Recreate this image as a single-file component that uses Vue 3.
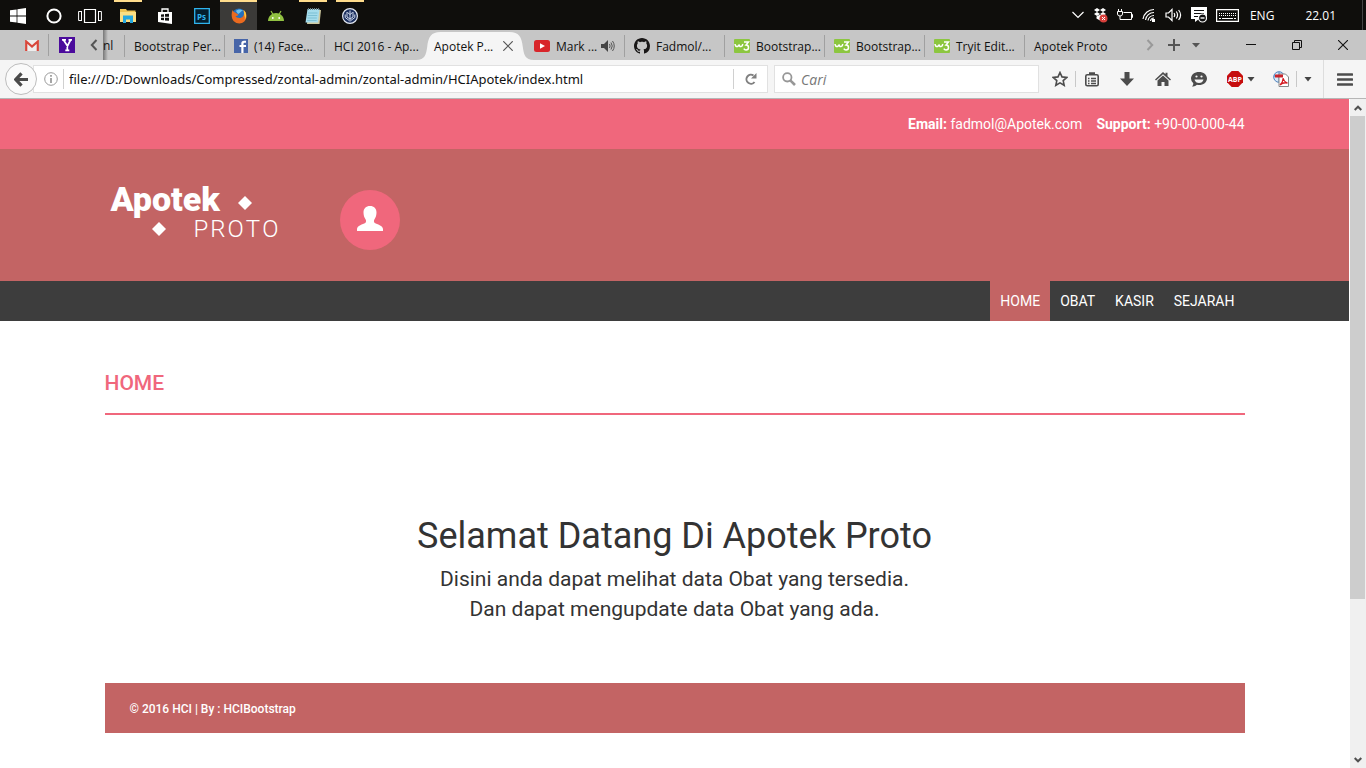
<script setup>
const tabs = [
  { title: 'Bootstrap Per...' },
  { title: '(14) Face...', icon: 'facebook' },
  { title: 'HCI 2016 - Ap...' },
  { title: 'Apotek P...', active: true },
  { title: 'Mark ...', icon: 'youtube', sound: true },
  { title: 'Fadmol/...', icon: 'github' },
  { title: 'Bootstrap...', icon: 'w3' },
  { title: 'Bootstrap...', icon: 'w3' },
  { title: 'Tryit Edit...', icon: 'w3' },
  { title: 'Apotek Proto' },
]
const menu = ['HOME', 'OBAT', 'KASIR', 'SEJARAH']
const address = 'file:///D:/Downloads/Compressed/zontal-admin/zontal-admin/HCIApotek/index.html'
</script>

<template>
  <div class="screen">
    <header class="taskbar">
      <div class="apps">
        <button class="app" aria-label="Start">
          <svg width="16" height="16" viewBox="0 0 16 16" fill="#fff"><path d="M0 2.3 6.6 1.4V7.6H0zM7.4 1.3 16 0V7.6H7.4zM0 8.4H6.6V14.6L0 13.7zM7.4 8.4H16V16L7.4 14.7z" /></svg>
        </button>
        <button class="app" aria-label="Cortana">
          <svg width="16" height="16" viewBox="0 0 16 16"><circle cx="8" cy="8" r="6.6" fill="none" stroke="#fff" stroke-width="2" /></svg>
        </button>
        <button class="app" aria-label="Task view">
          <svg width="24" height="16" viewBox="0 0 24 16" fill="none" stroke="#fff"><path d="M6.5 1.5h11v13h-11z" stroke-width="1.2" /><path d="M4 3.5H.6v9H4M20 3.5h3.4v9H20M3.5 3.5v9M20.5 3.5v9" /></svg>
        </button>
        <button class="app open explorer" aria-label="File Explorer">
          <svg width="16" height="14" viewBox="0 0 16 14"><path d="M0 0h6l1 1.5h8.500V13H0z" fill="#f0c453" /><path d="M0 3h16v10H0z" fill="#fcdf84" /><path d="M3 6.500h10V14h-3v-3.500H6V14H3z" fill="#27a8e0" /></svg>
        </button>
        <button class="app" aria-label="Store">
          <svg width="16" height="16" viewBox="0 0 16 16"><path d="M1 4h14v12L1 14z" fill="#fff" /><path d="M5 5V1h6v4" fill="none" stroke="#fff" stroke-width="1.300" /><path d="M4 6.500l3-.3v2.600H4zM8 6.100l4-.4v3.100H8zM4 9.800h3v2.500l-3-.3zM8 9.800h4v3l-4-.4z" fill="#111" /></svg>
        </button>
        <button class="app" aria-label="Photoshop">
          <svg width="16" height="16" viewBox="0 0 16 16"><path d="M.7.7h14.600v14.600H.7z" fill="#041e2e" stroke="#2fb4ee" stroke-width="1.300" /><text x="3" y="11.500" class="ps">Ps</text></svg>
        </button>
        <button class="app open current" aria-label="Firefox">
          <svg width="16" height="16" viewBox="0 0 16 16"><circle cx="8" cy="7.500" r="7" fill="#2470bd" /><path d="M5 3C7 1 10 1 12 3 9 3 10 5 7 6z" fill="#6cc3ed" /><path d="M1.500 2C0 6 0 13 5.500 15c5 1.800 10-1.500 10-7 0-3-1.500-5-3-6 1.500 4 0 8-4 8-2 0-3.500-1-4-2 1.500.3 2-.5 3-1.300L4.500 4.800C3 4 2.500 4 1.500 2z" fill="#ea6a1f" /><path d="M12.500 2c3 2 3.500 7 1 10 .5-2 .5-3 0-4z" fill="#fdc83c" /></svg>
        </button>
        <button class="app" aria-label="Android Studio">
          <svg width="18" height="14" viewBox="0 0 18 14"><path d="M1 12C1 7 5 4 9 4s8 3 8 8z" fill="#91c142" /><path d="M4 2l2.300 4M14 2l-2.300 4" stroke="#91c142" stroke-width="1.200" /><circle cx="5.800" cy="9" r=".9" fill="#fff" /><circle cx="12.200" cy="9" r=".9" fill="#fff" /></svg>
        </button>
        <button class="app open" aria-label="Notepad">
          <svg width="16" height="16" viewBox="0 0 16 16"><path d="M3.500 2H16l-1.500 14H2z" fill="#cfc9a0" /><path d="M2.500 1H14.500L13 14.500H.5z" fill="#a5dcec" /><path d="M3 5h9.500M2.800 7.500h9.400M2.500 10h9.400M2.200 12.500h9.400" stroke="#6bb5cb" stroke-width=".7" /><path d="M3 1h12" stroke="#6b7f86" stroke-width="2" stroke-dasharray="1 1" /></svg>
        </button>
        <button class="app open" aria-label="Source control">
          <svg width="16" height="16" viewBox="0 0 16 16"><circle cx="8" cy="8" r="7.400" fill="#1c2f5f" stroke="#e4e8f1" stroke-width="1.200" /><path d="M8 2.500v11M5 4v5l3 2 3-2V4M3.200 6.500v3l4 3M12.800 6.500v3l-4 3M5.500 4.500 8 6.500l2.500-2" fill="none" stroke="#cfd9ec" stroke-width="1" /></svg>
        </button>
      </div>
      <div class="tray">
        <svg width="12" height="8" viewBox="0 0 12 8"><path d="M.5 1 6 6.500 11.500 1" fill="none" stroke="#fff" stroke-width="1.200" /></svg>
        <svg width="15" height="15" viewBox="0 0 15 15"><path d="M4 0l3 2-3 2-3-2zM10 0l3 2-3 2-3-2zM4 4l3 2-3 2-3-2zM10 4l3 2-3 2-3-2zM3.500 8.500 7 6.800l3.500 1.700v2L7 12.500l-3.500-2z" fill="#fff" /><circle cx="10.500" cy="10.500" r="4" fill="#d8403c" /><path d="M9 9l3 3M12 9l-3 3" stroke="#fff" /></svg>
        <svg width="16" height="14" viewBox="0 0 16 14" fill="none" stroke="#fff"><path d="M6.500 4.500h8v7H5M14.500 6.500h1v3h-1M.5 3.500h5v2.500q0 2-2.500 2T.5 6zM1.500 1v2.500M4.500 1v2.500M3 8v3.500h3" /></svg>
        <svg width="14" height="14" viewBox="0 0 14 14" fill="none" stroke="#fff"><path d="M1 11A11 11 0 0 1 12 1.500M3.500 12A8.500 8.500 0 0 1 12 4.500M6 12.500a6 6 0 0 1 6-5M8.500 13a3.500 3.500 0 0 1 3.500-3" stroke-width="1.200" /><path d="M10 11h3v3h-3z" fill="#fff" stroke="none" /></svg>
        <svg width="17" height="14" viewBox="0 0 17 14" fill="none" stroke="#fff"><path d="M1 5h2.500L7 1.500v11L3.500 9H1zM9 5q1.500 2 0 4M11.300 3.500q2.500 3.500 0 7M13.600 2q4 5 0 10" stroke-width="1.200" /></svg>
        <svg width="16" height="16" viewBox="0 0 16 16"><path d="M0 0h16v12H8l-4 3v-3H0z" fill="#fff" /><path d="M3 3.500h10M3 6.500h10M3 9.500h4" stroke="#111" /><circle cx="11.500" cy="11" r="4" fill="#111" stroke="#fff" stroke-width="1.200" /><path d="M9.500 11h4" stroke="#fff" stroke-width="1.400" /></svg>
        <svg width="23" height="13" viewBox="0 0 23 13" fill="none" stroke="#fff"><path d="M.6.6h21.800v11.800H.6z" stroke-width="1.200" /><path d="M3 4.500h17M3 6.500h17" stroke-dasharray="1 1" /><path d="M3 9.500h2M6 9.500h11M18 9.500h2" /></svg>
        <span class="lang">ENG</span>
        <time class="clock">22.01</time>
      </div>
    </header>

    <div class="tabstrip">
      <div class="pinned">
        <button class="pin" aria-label="Gmail">
          <svg width="14" height="11" viewBox="0 0 14 11"><path d="M0 0h14v11H0z" fill="#eee" /><path d="M1.200 11V1.500L7 6.500l5.800-5V11" fill="none" stroke="#d8473b" stroke-width="2.200" /></svg>
        </button>
        <button class="pin ruled" aria-label="Yahoo">
          <svg width="16" height="16" viewBox="0 0 16 16"><path d="M0 0h16v16H0z" fill="#4b0b9c" /><path d="M3 2.800h4M9.500 2.800H13M4.500 3l4 6 3-6M8.300 8.500v4.800M6.300 13.300h4" fill="none" stroke="#fff" stroke-width="1.700" /></svg>
        </button>
        <button class="scroll-left" aria-label="Previous tabs">
          <svg width="8" height="12" viewBox="0 0 8 12"><path d="M6.500 1 1.800 6l4.700 5" fill="none" stroke="#555" stroke-width="2" /></svg>
        </button>
        <span class="partial">nl</span>
      </div>
      <nav class="tabs" aria-label="Tabs">
        <a v-for="(tab, i) in tabs" :key="i" href="#" class="tab" :class="{ active: tab.active, plain: i === 4 }">
          <svg v-if="tab.active" class="shape" viewBox="0 0 116 28" preserveAspectRatio="none"><path d="M0 28C9 28 10 22 11 15 12 5 15 0 24 0H92C101 0 104 5 105 15 106 22 107 28 116 28z" fill="#f5f5f5" /></svg>
          <svg v-if="tab.icon === 'facebook'" class="fav" width="14" height="14" viewBox="0 0 14 14"><path d="M0 0h14v14H0z" fill="#4765a8" /><path d="M9.500 14V8H12V6H9.500V4.800q0-1 1-1H12V1.800H10Q7.300 1.800 7.300 4.500V6H5.500v2h1.800v6z" fill="#fff" /></svg>
          <svg v-if="tab.icon === 'youtube'" class="fav" width="16" height="12" viewBox="0 0 16 12"><rect width="16" height="12" rx="2.500" fill="#d8252a" /><path d="M6 3.300v5.400L11 6z" fill="#fff" /></svg>
          <svg v-if="tab.icon === 'github'" class="fav" width="16" height="16" viewBox="0 0 16 16"><path fill="#191717" d="M8 0C3.580 0 0 3.580 0 8c0 3.540 2.290 6.530 5.470 7.590.4.070.55-.17.55-.38 0-.19-.01-.82-.01-1.490-2.010.37-2.530-.49-2.690-.94-.09-.23-.48-.94-.82-1.130-.28-.15-.68-.52-.01-.53.63-.01 1.080.58 1.230.82.72 1.210 1.870.87 2.330.66.07-.52.28-.87.51-1.070-1.780-.2-3.640-.89-3.640-3.950 0-.87.31-1.590.82-2.150-.08-.2-.36-1.020.08-2.120 0 0 .67-.21 2.200.82.64-.18 1.320-.27 2-.27s1.360.09 2 .27c1.530-1.040 2.200-.82 2.200-.82.44 1.100.16 1.920.08 2.120.51.56.82 1.270.82 2.150 0 3.070-1.870 3.750-3.650 3.950.29.25.54.73.54 1.480 0 1.070-.01 1.930-.01 2.200 0 .21.15.46.55.38A8 8 0 0 0 16 8c0-4.420-3.580-8-8-8z" /></svg>
          <svg v-if="tab.icon === 'w3'" class="fav" width="16" height="14" viewBox="0 0 16 14"><rect width="16" height="14" rx="1" fill="#8cc63f" /><path d="M1 5q.5 3 2.500 2.500Q5 7 5 5.500 5.500 8 7 7.500 9 7 8.500 5M10 3h4.500L12 6q2.500 0 2.500 2.500T12 11q-1.500 0-2.200-1.300" fill="none" stroke="#fff" stroke-width="1.500" /></svg>
          <span class="label">{{ tab.title }}</span>
          <svg v-if="tab.sound" class="sound" width="14" height="12" viewBox="0 0 14 12"><path d="M0 4h3l4-4v12L3 8H0z" fill="#444" /><path d="M8.500 4q1.200 2 0 4M10 2.500q2.500 3.500 0 7M11.500 1q3.500 5 0 10" fill="none" stroke="#555" /></svg>
          <svg v-if="tab.active" class="sound" width="10" height="10" viewBox="0 0 10 10"><path d="M.3.3l9.400 9.400M9.700.3.3 9.700" stroke="#555" stroke-width="1.200" /></svg>
        </a>
      </nav>
      <div class="window">
        <button class="w24" aria-label="Next tabs"><svg width="8" height="12" viewBox="0 0 8 12"><path d="M1.500 1 6.200 6l-4.700 5" fill="none" stroke="#999" stroke-width="2" /></svg></button>
        <button class="w24" aria-label="New tab"><svg width="12" height="12" viewBox="0 0 12 12"><path d="M6 0v12M0 6h12" stroke="#555" stroke-width="2" /></svg></button>
        <button class="w20" aria-label="All tabs"><svg width="8" height="5" viewBox="0 0 8 5"><path d="M0 0h8L4 4.500z" fill="#555" /></svg></button>
        <button class="w46" aria-label="Minimize"><svg width="10" height="10" viewBox="0 0 10 10"><path d="M0 4.500h10" stroke="#111" /></svg></button>
        <button class="w46" aria-label="Restore"><svg width="10" height="10" viewBox="0 0 10 10"><path d="M.5 2.500h7v7h-7zM2.500 2.500v-2h7v7h-2" fill="none" stroke="#111" /></svg></button>
        <button class="w46" aria-label="Close"><svg width="10" height="10" viewBox="0 0 10 10"><path d="M0 0l10 10M10 0 0 10" stroke="#111" stroke-width="1.100" /></svg></button>
      </div>
    </div>

    <div class="toolbar">
      <button class="back" aria-label="Back">
        <svg width="14" height="15" viewBox="0 0 14 15"><path d="M7.500 1.300 1.800 7.500l5.700 6.200M2 7.500h12" fill="none" stroke="#4a4a4a" stroke-width="3.200" /></svg>
      </button>
      <div class="address">
        <svg width="14" height="14" viewBox="0 0 14 14"><circle cx="7" cy="7" r="6.300" fill="none" stroke="#999" /><path d="M7 3v1.800M7 6v5" stroke="#888" stroke-width="1.500" /></svg>
        <input class="url" :value="address" aria-label="Address">
        <button class="reload" aria-label="Reload">
          <svg width="12" height="12" viewBox="0 0 12 12"><path d="M9.500 9A4.500 4.500 0 1 1 8.500 2.500" fill="none" stroke="#808080" stroke-width="2" /><path d="M11.500 0v5.500H6z" fill="#808080" /></svg>
        </button>
      </div>
      <div class="search">
        <svg width="14" height="14" viewBox="0 0 14 14" fill="none" stroke="#979797"><circle cx="5.300" cy="5.300" r="4.200" stroke-width="1.800" /><path d="M8.300 8.300 13 13" stroke-width="2.600" /></svg>
        <input class="find" placeholder="Cari" aria-label="Cari">
      </div>
      <div class="tools">
        <button class="tool" aria-label="Bookmark"><svg width="16" height="16" viewBox="0 0 16 16"><path d="M8 1.500l2 4.400 4.800.5-3.600 3.200 1 4.700L8 11.900l-4.200 2.400 1-4.700L1.200 6.400 6 5.900z" fill="none" stroke="#4c4c4c" stroke-width="1.600" /></svg></button>
        <button class="tool bar-left" aria-label="Bookmarks list"><svg width="14" height="15" viewBox="0 0 14 15" fill="none" stroke="#4c4c4c"><rect x=".8" y="2.800" width="12.400" height="11" rx="1.500" stroke-width="1.600" /><path d="M3 6.500h1.500M6 6.500h5M3 9h1.500M6 9h5M3 11.500h1.500M6 11.500h5" stroke-width="1.300" /><path d="M4 1.500h6" stroke-width="2.500" /></svg></button>
        <button class="tool" aria-label="Downloads"><svg width="14" height="14" viewBox="0 0 14 14"><path d="M4.500 0h5v6.500H14L7 14 0 6.500h4.500z" fill="#4c4c4c" /></svg></button>
        <button class="tool" aria-label="Home page"><svg width="16" height="14" viewBox="0 0 16 14"><path d="M8 0l2.500 2.300V.8h2v3.400L16 7.500l-1 1L8 2.200 1 8.500l-1-1z" fill="#4c4c4c" /><path d="M8 3.500l5.500 5V14H9.500v-4h-3v4h-4V8.500z" fill="#4c4c4c" /></svg></button>
        <button class="tool" aria-label="Chat"><svg width="16" height="15" viewBox="0 0 16 15"><path d="M8 0c4.500 0 8 2.700 8 6.500S12.500 13 8 13q-1 0-2-.2Q4 15 1 14.500q1.500-1.500 1.300-3.200Q0 9.500 0 6.500C0 2.700 3.500 0 8 0z" fill="#4c4c4c" /><path d="M3.500 7.500h9Q11.500 11 8 11T3.500 7.500z" fill="#f5f5f5" /><circle cx="5.500" cy="4.500" r="1.100" fill="#f5f5f5" /><circle cx="10.500" cy="4.500" r="1.100" fill="#f5f5f5" /></svg></button>
        <button class="tool" aria-label="Adblock Plus"><svg width="16" height="16" viewBox="0 0 16 16"><path d="M4.700 0h6.600L16 4.700v6.600L11.300 16H4.700L0 11.300V4.700z" fill="#c60d0d" /><text x="8" y="10.500" text-anchor="middle" class="abp">ABP</text></svg></button>
        <button class="caret" aria-label="Adblock options"><svg width="8" height="5" viewBox="0 0 8 5"><path d="M.5 0h7L4 4.500z" fill="#444" /></svg></button>
        <button class="tool pdf" aria-label="Save as PDF"><svg width="16" height="16" viewBox="0 0 16 16"><circle cx="6" cy="6" r="5.300" fill="#d8e8f7" stroke="#4d82bd" /><path d="M1 5h10M6 1v10" stroke="#4d82bd" /><path d="M6 3h6.500L15.500 6v9.500H6z" fill="#fff" stroke="#888" /><path d="M2 3.500h8v3H2z" fill="#c9242b" /><path d="M7 14q3-3 3.300-7Q11 11 14.500 12 10 11 7 14z" fill="none" stroke="#d51920" stroke-width="1.300" /></svg></button>
        <button class="caret wide" aria-label="PDF options"><svg width="8" height="5" viewBox="0 0 8 5"><path d="M.5 0h7L4 4.500z" fill="#444" /></svg></button>
        <button class="burger" aria-label="Menu"><svg width="16" height="13" viewBox="0 0 16 13"><path d="M1 1.500h14M1 6.500h14M1 11.500h14" stroke="#4c4c4c" stroke-width="2.600" stroke-linecap="round" /></svg></button>
      </div>
    </div>

    <div class="viewport">
      <main class="page">
        <section class="contact">
          <div class="container contact-row">
            <span><strong>Email:</strong> fadmol@Apotek.com</span>
            <span><strong>Support:</strong> +90-00-000-44</span>
          </div>
        </section>
        <section class="brand">
          <div class="container brand-row">
            <a href="#" class="logo" aria-label="Apotek Proto">
              <span class="logo-top"><span>Apotek</span><svg width="14" height="14" viewBox="0 0 14 14"><path d="M7 0l7 7-7 7-7-7z" fill="#fff" /></svg></span>
              <span class="logo-bottom"><svg width="14" height="14" viewBox="0 0 14 14"><path d="M7 0l7 7-7 7-7-7z" fill="#fff" /></svg><span class="proto"><span v-for="(c, i) in 'PROTO'" :key="i">{{ c }}</span></span></span>
            </a>
            <button class="user" aria-label="User">
              <svg width="26" height="25" viewBox="0 0 26 25"><path d="M13 0c4 0 6.500 2.500 6.500 6.500 0 2.500-.7 5-2 6.700-.8 1-.8 3 .3 3.700C20 18.200 26 19.500 26 23v2H0v-2c0-3.500 6-4.800 8.200-6.100 1.100-.7 1.100-2.700.3-3.700-1.300-1.700-2-4.200-2-6.700C6.500 2.500 9 0 13 0z" fill="#fff" /></svg>
            </button>
          </div>
        </section>
        <nav class="menu" aria-label="Main">
          <div class="container menu-row">
            <a v-for="(item, i) in menu" :key="item" href="#" :class="{ on: i === 0 }">{{ item }}</a>
          </div>
        </nav>
        <div class="container">
          <h4 class="heading">HOME</h4>
          <div class="welcome">
            <h1>Selamat Datang Di Apotek Proto</h1>
            <p>Disini anda dapat melihat data Obat yang tersedia.<br>Dan dapat mengupdate data Obat yang ada.</p>
          </div>
          <footer class="footer">© 2016 HCI | By : HCIBootstrap</footer>
        </div>
      </main>
      <div class="scrollbar">
        <button aria-label="Scroll up"><svg width="8" height="6" viewBox="0 0 8 6"><path d="M.7 5 4 1.700 7.300 5" fill="none" stroke="#505050" stroke-width="2" /></svg></button>
        <div class="track"><div class="thumb"></div></div>
        <button aria-label="Scroll down"><svg width="8" height="6" viewBox="0 0 8 6"><path d="M.7 1 4 4.300 7.300 1" fill="none" stroke="#505050" stroke-width="2" /></svg></button>
      </div>
    </div>
  </div>
</template>

<style>
body { margin: 0; }
</style>

<style scoped>
* { box-sizing: border-box; }
button { border: 0; padding: 0; background: none; display: flex; align-items: center; justify-content: center; flex: none; }
input { border: 0; padding: 0; background: none; outline: 0; min-width: 0; }
a { color: inherit; text-decoration: none; }
svg { display: block; flex: none; }
.screen { display: flex; flex-direction: column; height: 100vh; overflow: hidden; font-family: "Open Sans", "Noto Sans", sans-serif; }

.taskbar { display: flex; justify-content: space-between; height: 30px; flex: none; background: #0f0e0c; color: #fff; font-size: 12px; }
.apps { display: flex; }
.app { width: 37px; height: 30px; border-top: 2px solid transparent; }
.app:nth-child(-n + 3) { width: 36px; }
.explorer { margin-left: 1px; }
.open { border-image: linear-gradient(90deg, transparent 5px, #ffdc8c 5px, #ffdc8c 33px, transparent 33px) 2 0 0 0; }
.current { background: #3b3a38; border-image: none; border-top-color: #ffdc8c; }
.ps { font: 700 8px "Open Sans", sans-serif; fill: #2fb4ee; }
.tray { display: flex; align-items: center; gap: 9px; margin-right: 3px; padding-right: 26px; border-right: 1px solid #444; }
.lang { margin-left: 2px; }
.clock { margin-left: 22px; }

.tabstrip { display: flex; height: 30px; flex: none; background: #c6c6c6; color: #111; font-size: 12px; }
.pinned { display: flex; align-items: center; padding-left: 16px; }
.pin { width: 32px; height: 22px; }
.ruled { width: 36px; border-left: 1px solid #a0a0a0; }
.scroll-left { width: 19px; height: 30px; }
.partial { width: 21px; height: 30px; line-height: 32px; overflow: hidden; background: linear-gradient(90deg, #777, #c6c6c6 5px); }
.tabs { display: flex; flex: 1; min-width: 0; }
.tab { position: relative; display: flex; align-items: center; width: 100px; height: 22px; margin-top: 5px; padding: 0 9px; border-left: 1px solid #a0a0a0; flex: none; white-space: nowrap; }
.tab.active, .tab.plain { border-left-color: transparent; }
.tab:last-child { width: 112px; }
.shape { position: absolute; left: -9px; top: -3px; width: 118px; height: 28px; }
.label { position: relative; }
.fav { margin-right: 6px; }
.sound { position: relative; margin-left: auto; }
.tab.active { padding-right: 11px; }
.window { display: flex; align-items: center; }
.w24 { width: 24px; }
.w20 { width: 20px; margin-right: 22px; }
.w46 { width: 46px; }

.toolbar { display: flex; align-items: center; height: 39px; flex: none; padding-left: 5px; background: #f5f5f5; border-bottom: 1px solid #b6b6b6; }
.back { position: relative; width: 32px; height: 32px; border: 1px solid #bdbdbd; border-radius: 50%; background: #fafafa; }
.address { display: flex; align-items: center; flex: 1; height: 28px; margin-left: -4px; padding-left: 10px; background: #fff; border: 1px solid #e1e1e1; }
.url { flex: 1; height: 20px; margin-left: 5px; padding-left: 5px; border-left: 1px solid #d0d0d0; font: 13px "Noto Sans", sans-serif; color: #111; }
.reload { width: 34px; height: 20px; border-left: 1px solid #d0d0d0; }
.search { display: flex; align-items: center; width: 265px; height: 28px; margin-left: 6px; padding-left: 7px; background: #fff; border: 1px solid #e1e1e1; }
.find { flex: 1; margin-left: 5px; font: italic 14px "Open Sans", sans-serif; }
.find::placeholder { color: #777; }
.tools { display: flex; align-items: center; padding-left: 3px; }
.tool { width: 36px; height: 16px; }
.bar-left { width: 32px; margin-left: -3px; border-left: 1px solid #c8c8c8; }
.bar-left + .tool { margin-left: 2px; }
.caret { width: 12px; height: 16px; margin-left: -8px; }
.pdf { margin-left: 6px; }
.wide { width: 22px; margin-left: -3px; border-left: 1px solid #c8c8c8; }
.burger { width: 43px; height: 38px; margin-left: 5px; border-left: 1px solid #ddd; }
.abp { font: 700 7px "Open Sans", sans-serif; fill: #fff; }

.viewport { display: flex; flex: 1; min-height: 0; }
.page { flex: 1; min-width: 0; margin-right: 1px; background: #fff; color: #333; font-family: Roboto, sans-serif; font-size: 14px; }
.container { max-width: 1170px; margin: 0 auto; padding: 0 15px; }
.contact { background: #f0677c; color: #fff; }
.contact-row { display: flex; justify-content: flex-end; gap: 14px; height: 50px; line-height: 50px; }
.brand { background: #c36464; }
.brand-row { display: flex; align-items: center; height: 132px; padding-top: 10px; }
.logo { width: 235px; margin-bottom: 8px; padding-left: 6px; color: #fff; }
.logo-top { display: flex; align-items: flex-end; gap: 18px; height: 26px; font: 900 34px/34px Roboto, sans-serif; }
.logo-top svg { align-self: center; }
.logo-bottom { display: flex; align-items: center; height: 26px; padding-left: 41px; gap: 28px; }
.proto { display: flex; gap: 2px; font: 300 24px/26px Roboto, sans-serif; }
.user { width: 60px; height: 60px; padding-bottom: 3px; border-radius: 50%; background: #f0677c; }
.menu { background: #3d3d3d; color: #fff; }
.menu-row { display: flex; justify-content: flex-end; }
.menu-row a { padding: 0 10px; line-height: 40px; }
.menu-row .on { background: #c36464; }
.heading { margin: 0; padding: 50px 0 18px; border-bottom: 2px solid #f0677c; color: #f0677c; font-size: 21px; line-height: 24px; font-weight: 500; }
.welcome { padding: 101px 0 59px; text-align: center; }
.welcome h1 { margin: 0; font-size: 36px; line-height: 40px; font-weight: 400; }
.welcome p { margin: 8px 0 0; font-size: 21px; line-height: 30px; }
.footer { height: 50px; padding-left: 25px; background: #c36464; color: #fff; font-size: 12px; line-height: 52px; font-weight: 500; }

.scrollbar { display: flex; flex-direction: column; width: 16px; flex: none; background: #f0f0f0; }
.scrollbar button { height: 17px; }
.track { flex: 1; }
.thumb { width: 15px; height: 76%; background: #cdcdcd; }
</style>
